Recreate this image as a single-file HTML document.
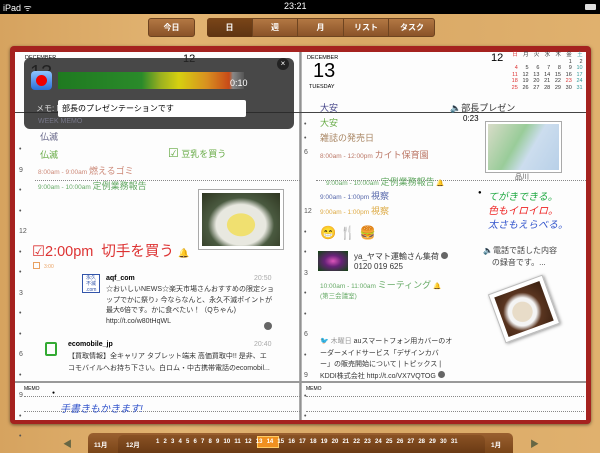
<!DOCTYPE html>
<html><head><meta charset="utf-8"><style>
*{margin:0;padding:0;box-sizing:border-box}
body{width:600px;height:450px;overflow:hidden;position:relative;font-family:"Liberation Sans","Noto Sans CJK JP",sans-serif;background:linear-gradient(90deg,#d6a35f,#e2b472 30%,#d9a865 60%,#e0b16e);}
.a{position:absolute;white-space:nowrap}
.sb{top:0;left:0;width:600px;height:14px;background:#000;color:#fff;font-size:9px}
.btn{height:19px;top:18px;background:linear-gradient(#b27743,#8a5328);border:1px solid #6e4420;border-radius:3px;color:#fff;font-size:8px;text-align:center;line-height:17px;font-weight:bold}
.seg{top:18px;height:19px;color:#fff;font-size:8px;font-weight:bold;text-align:center;line-height:19px;border-right:1px solid #6e4420}
.book{left:10px;top:46px;width:581px;height:378px;background:#a5221f;border-radius:4px;box-shadow:0 1px 3px rgba(0,0,0,.5)}
.pg{top:52px;height:368px;background:#fdfdfd}
.j{font-size:9px}
.dot{font-size:7px;color:#555}
.dl{height:0;border-top:1px dotted #888}
.cal{border-collapse:collapse;font-size:5.5px;color:#333}
.cal td{width:10.8px;height:6.6px;text-align:right;padding:0;line-height:6.6px}
.r{color:#d33}.b{color:#399}
</style></head><body>
<div class="a sb"><span class="a" style="left:3px;top:1px">iPad ᯤ</span><span class="a" style="left:284px;top:1px">23:21</span><span class="a" style="left:585px;top:4px;width:11px;height:6px;background:#ddd;border-radius:1px"></span></div>

<div class="a btn" style="left:148px;width:47px">今日</div>
<div class="a" style="left:207px;top:18px;width:228px;height:19px;background:linear-gradient(#b27743,#8a5328);border:1px solid #6e4420;border-radius:3px"></div>
<div class="a seg" style="left:207px;width:46px;background:linear-gradient(#7a4518,#5e3412);border-radius:3px 0 0 3px">日</div>
<div class="a seg" style="left:253px;width:45px">週</div>
<div class="a seg" style="left:298px;width:46px">月</div>
<div class="a seg" style="left:344px;width:45px">リスト</div>
<div class="a seg" style="left:389px;width:46px;border:none">タスク</div>

<div class="a book"></div>
<div class="a pg" style="left:15px;width:285px"></div>
<div class="a pg" style="left:301px;width:285px"></div>
<div class="a" style="left:299px;top:52px;width:3px;height:368px;background:linear-gradient(90deg,#bbb,#888,#ccc)"></div>
<div class="a" style="left:15px;top:112px;width:571px;height:1px;background:#444"></div>
<div class="a" style="left:15px;top:381px;width:571px;height:2px;background:#999"></div>

<!-- left header (under overlay) -->
<div class="a" style="left:25px;top:55px;font-size:5.5px">DECEMBER</div>
<div class="a" style="left:30px;top:62px;font-size:20px">13</div>
<div class="a" style="left:183px;top:53px;font-size:11px">12</div>
<!-- overlay -->
<div class="a" style="left:24px;top:58px;width:270px;height:71px;background:rgba(40,40,40,.85);border-radius:6px"></div>
<div class="a" style="left:31px;top:71px;width:21px;height:19px;border-radius:4px;background:linear-gradient(#8ec4ff,#2a6fd8)"><div class="a" style="left:5px;top:4px;width:11px;height:11px;border-radius:50%;background:#e00"></div></div>
<div class="a" style="left:58px;top:72px;width:186px;height:17px;background:linear-gradient(90deg,#1f7a20 0%,#2a8a2a 45%,#9ab020 55%,#d6d010 65%,#d89020 80%,#c84a18 92%,#888 94%,#555 100%)"></div>
<div class="a" style="left:230px;top:78px;color:#fff;font-size:9px">0:10</div>
<div class="a" style="left:277px;top:58px;width:12px;height:12px;border-radius:50%;background:#222;color:#fff;font-size:8px;text-align:center;line-height:12px">×</div>
<div class="a" style="left:36px;top:103px;color:#ddd;font-size:8px">メモ: M</div>
<div class="a" style="left:58px;top:100px;width:188px;height:17px;background:#fff;border-radius:2px;font-size:8px;line-height:17px;padding-left:4px">部長のプレゼンテーションです</div>
<div class="a" style="left:38px;top:118px;color:#778;font-size:7px">WEEK MEMO</div>

<!-- right header -->
<div class="a" style="left:307px;top:55px;font-size:5.5px">DECEMBER</div>
<div class="a" style="left:313px;top:60px;font-size:20px">13</div>
<div class="a" style="left:309px;top:84px;font-size:5.5px">TUESDAY</div>
<div class="a" style="left:491px;top:52px;font-size:11px">12</div>
<table class="a cal" style="left:507px;top:52px">
<tr><td class="r">日</td><td>月</td><td>火</td><td>水</td><td>木</td><td>金</td><td class="b">土</td></tr>
<tr><td></td><td></td><td></td><td></td><td></td><td>1</td><td>2</td></tr>
<tr><td class="r">4</td><td>5</td><td>6</td><td>7</td><td>8</td><td>9</td><td class="b">10</td></tr>
<tr><td class="r">11</td><td>12</td><td>13</td><td>14</td><td>15</td><td>16</td><td class="b">17</td></tr>
<tr><td class="r">18</td><td>19</td><td>20</td><td>21</td><td>22</td><td class="r">23</td><td class="b">24</td></tr>
<tr><td class="r">25</td><td>26</td><td>27</td><td>28</td><td>29</td><td>30</td><td class="b">31</td></tr>
</table>

<!-- left page body -->
<div class="a j" style="left:40px;top:130px;color:#668">仏滅</div>
<div class="a j" style="left:40px;top:148px;color:#6a4">仏滅</div>
<div class="a j" style="left:168px;top:146px;color:#6a4"><span style="font-size:12px">☑</span> 豆乳を買う</div>
<div class="a" style="left:38px;top:164px;color:#c87;font-size:6.5px">8:00am - 9:00am <span style="font-size:9px">燃えるゴミ</span></div>
<div class="a dl" style="left:35px;top:180px;width:265px"></div>
<div class="a" style="left:38px;top:179px;color:#6a6;font-size:6.5px">9:00am - 10:00am <span style="font-size:9px">定例業務報告</span></div>
<div class="a" style="left:198px;top:189px;width:86px;height:61px;background:#fff;border:1px solid #aaa;padding:3px"><div style="width:100%;height:100%;background:radial-gradient(ellipse at 50% 60%,#f0e070 0 25%,#e8e8e0 26% 45%,#4a5a40 60%,#2e3520)"></div></div>
<div class="a" style="left:32px;top:240px;color:#d33;font-size:14.5px">☑2:00pm&nbsp; 切手を買う <span style="font-size:9px">🔔</span></div>
<div class="a" style="left:33px;top:262px;width:7px;height:7px;border:1px solid #e9a060"></div>
<div class="a" style="left:44px;top:264px;color:#e9a060;font-size:5px">3:00</div>
<div class="a" style="left:82px;top:274px;width:18px;height:19px;background:#fff;border:1px solid #35a;font-size:5px;color:#35a;line-height:6px;text-align:center">永久<br>不滅<br>.com</div>
<div class="a" style="left:106px;top:275px;font-size:7px;font-weight:bold">aqf_com</div>
<div class="a" style="left:254px;top:275px;font-size:7px;color:#aaa">20:50</div>
<div class="a" style="left:106px;top:285px;font-size:7px;line-height:10.5px;color:#333;white-space:normal;width:170px">☆おいしいNEWS☆楽天市場さんおすすめの限定ショップでかに祭り♪ 今ならなんと、永久不滅ポイントが最大6倍です。かに食べたい！（Qちゃん)<br>http://t.co/w80tHqWL</div>
<div class="a" style="left:264px;top:322px;width:8px;height:8px;border-radius:50%;background:#666"></div>
<div class="a" style="left:45px;top:342px;width:12px;height:14px;border:2px solid #3a3;border-radius:2px"></div>
<div class="a" style="left:68px;top:341px;font-size:7px;font-weight:bold">ecomobile_jp</div>
<div class="a" style="left:254px;top:341px;font-size:7px;color:#aaa">20:40</div>
<div class="a" style="left:68px;top:351px;font-size:7px;line-height:12px;color:#333">【買取情報】全キャリア タブレット端末 高価買取中!! 是非、エ<br>コモバイルへお持ち下さい。白ロム・中古携帯電話のecomobil...</div>
<div class="a dot" style="left:19px;top:140px;line-height:20.5px">•<br>9<br>•<br>•<br>12<br>•<br>•<br>3<br>•<br>•<br>6<br>•<br>9<br>•<br>•</div>

<!-- right page body -->
<div class="a dot" style="left:304px;top:118px;line-height:14px">•<br>•<br>6</div>
<div class="a j" style="left:320px;top:101px;color:#448">大安</div>
<div class="a j" style="left:320px;top:116px;color:#6a4">大安</div>
<div class="a j" style="left:320px;top:131px;color:#a86">雑誌の発売日</div>
<div class="a" style="left:320px;top:148px;color:#b76;font-size:6.5px">8:00am - 12:00pm <span style="font-size:9px">カイト保育園</span></div>
<div class="a dl" style="left:316px;top:180px;width:270px"></div>
<div class="a" style="left:326px;top:175px;color:#6a6;font-size:6.5px">9:00am - 10:00am <span style="font-size:9px">定例業務報告</span> <span style="color:#d33">🔔</span></div>
<div class="a" style="left:320px;top:189px;color:#56a;font-size:6.5px">9:00am - 1:00pm <span style="font-size:9px">視察</span></div>
<div class="a" style="left:320px;top:204px;color:#da4;font-size:6.5px">9:00am - 1:00pm <span style="font-size:9px">視察</span></div>
<div class="a" style="left:320px;top:225px;font-size:13px">😁 <span style="color:#999">🍴</span> 🍔</div>
<div class="a" style="left:318px;top:251px;width:30px;height:20px;background:radial-gradient(#d5b,#627 40%,#141)"></div>
<div class="a" style="left:354px;top:251px;font-size:8px;color:#333">ya_ヤマト運輸さん集荷 <span style="display:inline-block;width:7px;height:7px;border-radius:50%;background:#666"></span><br>0120 019 625</div>
<div class="a" style="left:320px;top:278px;color:#6a6;font-size:6.5px">10:00am - 11:00am <span style="font-size:9px">ミーティング</span> <span style="color:#d33">🔔</span></div>
<div class="a" style="left:320px;top:290px;color:#6a6;font-size:6.5px">(第三会議室)</div>
<div class="a" style="left:450px;top:101px;font-size:9px;color:#333"><span style="color:#a86">🔈</span>部長プレゼン</div>
<div class="a" style="left:463px;top:114px;font-size:8px">0:23</div>
<div class="a" style="left:485px;top:121px;width:77px;height:52px;background:#fff;border:1px solid #aaa;padding:2px"><div style="width:100%;height:100%;background:linear-gradient(120deg,#d8dcc8,#9c9 40%,#cde 60%,#b8d0e8)"></div></div>
<div class="a" style="left:515px;top:172px;font-size:7px;color:#555">品川</div>
<div class="a" style="left:478px;top:190px;font-size:6px">●</div>
<div class="a" style="left:488px;top:191px;font-size:10px;font-style:italic;line-height:14px"><span style="color:#2a4">てがきできる。</span><br><span style="color:#e22">色もイロイロ。</span><br><span style="color:#35c">太さもえらべる。</span></div>
<div class="a" style="left:483px;top:245px;font-size:8px;color:#444;line-height:12px"><span style="color:#a86">🔈</span>電話で話した内容<br>&nbsp;&nbsp;&nbsp;&nbsp;の録音です。...</div>
<div class="a" style="left:495px;top:283px;width:58px;height:52px;background:#fff;border:1px solid #bbb;padding:4px;transform:rotate(-20deg);box-shadow:1px 1px 3px rgba(0,0,0,.4)"><div style="width:100%;height:100%;background:radial-gradient(circle at 45% 55%,#e8dcc8 0 28%,#f4f4f4 30% 40%,#5a3520 55%,#3a2010)"></div></div>
<div class="a" style="left:320px;top:336px;font-size:7px;line-height:11.5px;color:#333"><span style="color:#3ac">🐦</span> <span style="color:#999">木曜日</span> auスマートフォン用カバーのオ<br>ーダーメイドサービス「デザインカバ<br>ー」の販売開始について | トピックス |<br>KDDI株式会社 http://t.co/VX7VQTOG <span style="display:inline-block;width:7px;height:7px;border-radius:50%;background:#666"></span></div>
<div class="a dot" style="left:304px;top:202px;line-height:20.5px">12<br>•<br>•<br>3<br>•<br>•<br>6<br>•<br>9<br>•<br>•</div>

<!-- memo -->
<div class="a" style="left:24px;top:386px;font-size:5px">MEMO</div>
<div class="a" style="left:306px;top:386px;font-size:5px">MEMO</div>
<div class="a dl" style="left:24px;top:396px;width:276px"></div>
<div class="a dl" style="left:24px;top:411px;width:276px"></div>
<div class="a dl" style="left:306px;top:396px;width:278px"></div>
<div class="a dl" style="left:306px;top:411px;width:278px"></div>
<div class="a" style="left:52px;top:390px;font-size:5px">●</div>
<div class="a" style="left:60px;top:400px;font-size:10px;color:#35c;font-style:italic">手書きもかきます!</div>

<!-- bottom bar -->
<div class="a" style="left:63px;top:437px;font-size:9px;color:#664">◀</div>
<div class="a" style="left:530px;top:437px;font-size:9px;color:#664">▶</div>
<div class="a" style="left:88px;top:433px;width:425px;height:20px;background:linear-gradient(#9a6030,#7a4518);border-radius:5px 5px 0 0"></div>
<div class="a" style="left:118px;top:435px;width:367px;height:18px;background:linear-gradient(#8a5224,#6a3a14);border-radius:5px 5px 0 0"></div>
<div class="a" style="left:94px;top:439px;color:#fff;font-size:6.5px;font-weight:bold">11月</div>
<div class="a" style="left:126px;top:439px;color:#fff;font-size:6.5px;font-weight:bold">12月</div>
<div class="a" style="left:257px;top:436px;width:22px;height:12px;background:#f09020;border:1px solid #fc6"></div>
<div class="a" style="left:156px;top:439px;color:#fff;font-size:6px;font-weight:bold;word-spacing:2.5px">1 2 3 4 5 6 7 8 9 10 11 12 13 14 15 16 17 18 19 20 21 22 23 24 25 26 27 28 29 30 31</div>
<div class="a" style="left:491px;top:439px;color:#fff;font-size:6.5px;font-weight:bold">1月</div>
</body></html>
